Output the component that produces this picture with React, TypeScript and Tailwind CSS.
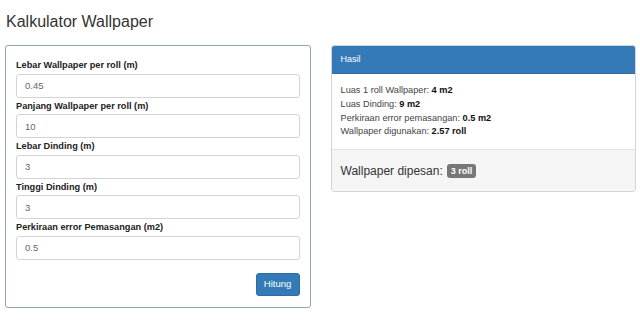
import React from 'react';

const fields = [
  { label: 'Lebar Wallpaper per roll (m)', value: '0.45' },
  { label: 'Panjang Wallpaper per roll (m)', value: '10' },
  { label: 'Lebar Dinding (m)', value: '3' },
  { label: 'Tinggi Dinding (m)', value: '3' },
  { label: 'Perkiraan error Pemasangan (m2)', value: '0.5' },
];

const App: React.FC = () => {
  return (
    <div className="w-[640px] h-[320px] bg-white text-[#333] font-['Liberation_Sans',Arial,sans-serif] pl-[5px] pr-[4px] overflow-hidden">
      <h3 className="text-[16px] leading-[20px] pt-[12px] pl-[1px] mb-[13px] text-[#333]">Kalkulator Wallpaper</h3>

      <div className="flex gap-[20px] items-start">
        <div className="w-[306px] border border-[#8fa3b3] rounded-[3px] px-[10px] pt-[11px] pb-[11px]">
          {fields.map((f) => (
            <div key={f.label}>
              <label className="block text-[9.2px] leading-[16.5px] font-bold text-[#222]">{f.label}</label>
              <input
                readOnly
                value={f.value}
                className="block w-full h-[24px] border border-[#d4d4d4] rounded-[3px] px-[8px] text-[9.5px] text-[#666] outline-none"
              />
            </div>
          ))}
          <div className="flex justify-end mt-[13px]">
            <button className="h-[23px] w-[44px] bg-[#337ab7] border border-[#2e6da4] rounded-[3px] text-white text-[9.5px]">
              Hitung
            </button>
          </div>
        </div>

        <div className="w-[306px] border border-[#cfd5da] rounded-[3px] overflow-hidden">
          <div className="h-[28px] bg-[#337ab7] border-b border-[#2e6da4] px-[9px] flex items-center text-white text-[9px]">
            Hasil
          </div>
          <div className="px-[9px] pt-[10px] pb-[10px] text-[9.2px] leading-[13.8px] text-[#444]">
            <div>Luas 1 roll Wallpaper: <b className="text-[#111]">4 m2</b></div>
            <div>Luas Dinding: <b className="text-[#111]">9 m2</b></div>
            <div>Perkiraan error pemasangan: <b className="text-[#111]">0.5 m2</b></div>
            <div>Wallpaper digunakan: <b className="text-[#111]">2.57 roll</b></div>
          </div>
          <div className="h-[42px] bg-[#f5f5f5] border-t border-[#e3e3e3] px-[9px] flex items-center gap-[4px]">
            <span className="text-[12px] text-[#333]">Wallpaper dipesan:</span>
            <span className="bg-[#777] text-white text-[9px] font-bold rounded-[3px] px-[4px] py-[2px] leading-[10px]">3 roll</span>
          </div>
        </div>
      </div>
    </div>
  );
};

export default App;
